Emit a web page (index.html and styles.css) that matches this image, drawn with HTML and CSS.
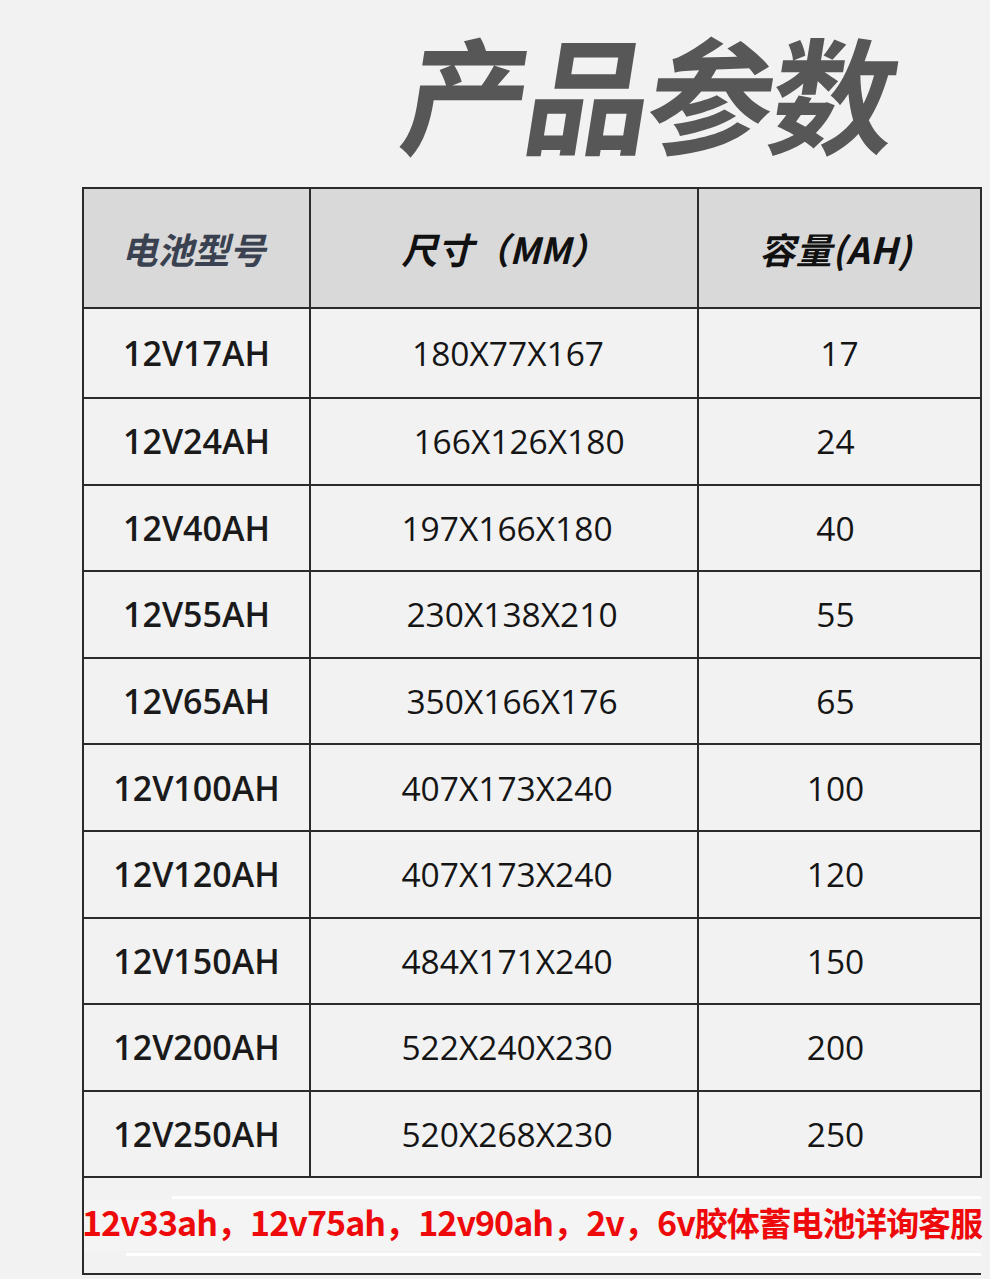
FILE: index.html
```html
<!DOCTYPE html>
<html lang="zh-CN">
<head>
<meta charset="utf-8">
<title>产品参数</title>
<link rel="stylesheet" href="styles.css">
</head>
<body>
<div class="page">
  <h1 class="title">产品参数</h1>
  <table class="spec">
    <colgroup>
      <col class="c1"><col class="c2"><col class="c3">
    </colgroup>
    <thead>
      <tr class="head">
        <th class="h-model">电池型号</th>
        <th class="h-size">尺寸（MM）</th>
        <th class="h-cap">容量(AH)</th>
      </tr>
    </thead>
    <tbody>
      <tr class="first"><td class="model">12V17AH</td><td class="size">180X77X167</td><td class="cap">17</td></tr>
      <tr><td class="model">12V24AH</td><td class="size s2">166X126X180</td><td class="cap cap-l">24</td></tr>
      <tr><td class="model">12V40AH</td><td class="size s3">197X166X180</td><td class="cap cap-l">40</td></tr>
      <tr><td class="model">12V55AH</td><td class="size s4">230X138X210</td><td class="cap cap-l">55</td></tr>
      <tr><td class="model">12V65AH</td><td class="size s4">350X166X176</td><td class="cap cap-l">65</td></tr>
      <tr><td class="model">12V100AH</td><td class="size s3">407X173X240</td><td class="cap cap-l">100</td></tr>
      <tr><td class="model">12V120AH</td><td class="size s3">407X173X240</td><td class="cap cap-l">120</td></tr>
      <tr><td class="model">12V150AH</td><td class="size s3">484X171X240</td><td class="cap cap-l">150</td></tr>
      <tr><td class="model">12V200AH</td><td class="size s3">522X240X230</td><td class="cap cap-l">200</td></tr>
      <tr><td class="model">12V250AH</td><td class="size s3">520X268X230</td><td class="cap cap-l">250</td></tr>
      <tr class="foot">
        <td colspan="3" class="note-cell">
          <div class="stripe stripe-top"></div>
          <div class="note">12v33ah，12v75ah，12v90ah，2v，6v<span class="note-cjk">胶体蓄电池详询客服</span></div>
          <div class="stripe stripe-bottom"></div>
        </td>
      </tr>
    </tbody>
  </table>
</div>
</body>
</html>
```

FILE: styles.css
```css
html, body {
  margin: 0;
  padding: 0;
  background: #f2f2f2;
}

.page {
  width: 990px;
  height: 1279px;
  overflow: hidden;
}

.title {
  margin: 0;
  height: 187px;
  box-sizing: border-box;
  padding-left: 390px;
  padding-top: 20px;
  font-family: "Noto Sans CJK SC", sans-serif;
  font-weight: 700;
  font-size: 126px;
  line-height: 140px;
  color: #575757;
  letter-spacing: -3.5px;
  white-space: nowrap;
  transform: skewX(-9deg);
  transform-origin: left bottom;
}

.spec {
  margin-left: 82px;
  border-collapse: collapse;
  table-layout: fixed;
  width: 898px;
  font-family: "Open Sans", "Noto Sans CJK SC", sans-serif;
  color: #151515;
}

.c1 { width: 227px; }
.c2 { width: 388px; }
.c3 { width: 283px; }

.spec th,
.spec td {
  border: 2px solid #2b2b2b;
  padding: 0;
  text-align: center;
  vertical-align: middle;
}

.head {
  height: 120px;
  background: #d9d9d9;
}

.head th {
  font-family: "Noto Sans CJK SC", sans-serif;
  font-weight: 700;
  font-size: 36px;
  color: #111;
  padding-top: 0;
}

.h-model {
  color: #3a4150 !important;
  font-style: italic;
  padding-right: 6px !important;
}

.h-size {
  font-style: italic;
}

.h-cap {
  font-style: italic;
  padding-right: 8px !important;
  letter-spacing: 0.5px;
}

.spec tbody tr {
  height: 86.6px;
}

.spec tbody tr.first {
  height: 90px;
}

.model {
  font-size: 34px;
  font-weight: 600;
  color: #1a1a1a;
}

.size {
  font-size: 33.5px;
  font-weight: 500;
  padding-left: 8px !important;
}

.s2 { padding-left: 30px !important; }
.s3 { padding-left: 6px !important; }
.s4 { padding-left: 16px !important; }

.cap {
  font-size: 33.5px;
  font-weight: 500;
}

.cap-l { padding-right: 8px !important; }

.spec tbody tr.foot {
  height: 97px;
}

.note-cell {
  border-right: none !important;
  text-align: left !important;
  vertical-align: top !important;
  padding-top: 18px !important;
}

.stripe {
  height: 3px;
  background: #ffffff;
}

.stripe-top {
  margin-left: 88px;
}

.stripe-bottom {
  margin-left: 42px;
  margin-top: 2px;
}

.note {
  margin-left: -2px;
  background: #f4f4f4;
  font-family: "Noto Sans CJK SC", sans-serif;
  font-weight: 700;
  font-size: 34px;
  line-height: 46px;
  padding-bottom: 6px;
  color: #ee0a0a;
  white-space: nowrap;
  letter-spacing: -0.95px;
}

.note-cjk {
  font-size: 33px;
  letter-spacing: -1.1px;
}
```
